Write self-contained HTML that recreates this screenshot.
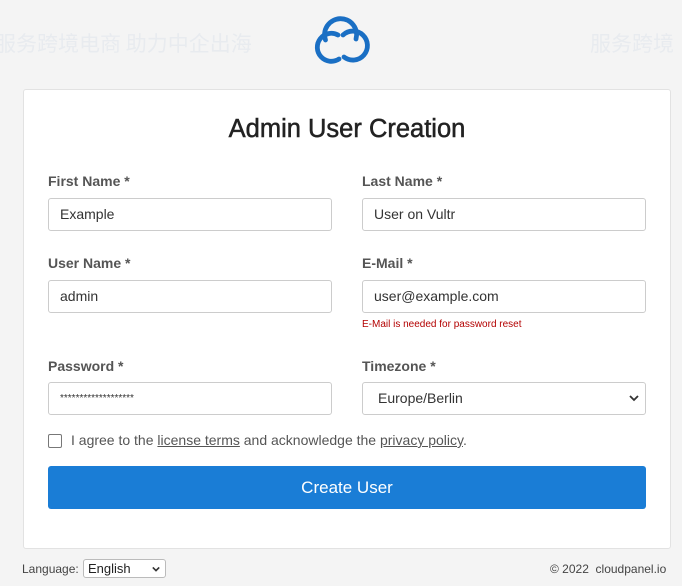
<!DOCTYPE html>
<html><head><meta charset="utf-8"><style>
body{margin:0;width:682px;height:586px;background:#f4f4f4;font-family:"Liberation Sans",Arial,sans-serif;position:relative;overflow:hidden;color:#333}
.a{position:absolute}
.card{left:23px;top:89px;width:648px;height:460px;background:#fff;border:1px solid #e2e2e2;border-radius:3px;box-sizing:border-box}
h1{position:absolute;left:0;width:694px;top:115px;margin:0;text-align:center;font-size:25.5px;font-weight:normal;color:#222;-webkit-text-stroke:.5px #222}
.lb{font-size:14px;font-weight:bold;color:#555}
.in{width:284px;height:33px;border:1px solid #ccc;border-radius:3px;box-sizing:border-box;font-size:14px;line-height:31px;padding-left:11px;color:#333;background:#fff}
.wm{color:#e8ebef;font-family:"Noto Sans CJK SC",sans-serif;font-size:21px}
</style></head><body>
<div class="a wm" style="left:-5px;top:28px">服务跨境电商 助力中企出海</div>
<div class="a wm" style="left:590px;top:28px">服务跨境</div>
<svg class="a" style="left:0;top:0" width="682" height="80" fill="none" stroke="#1a6fc4" stroke-width="4.8" stroke-linecap="round">
<path d="M325.5 40 A16 16 0 1 1 356 39"/>
<path d="M338 35 A14 14 0 1 0 339 59"/>
<path d="M343 35 A14.5 14.5 0 1 1 344 57"/>
</svg>
<div class="a card"></div>
<h1>Admin User Creation</h1>
<div class="a lb" style="left:48px;top:173px">First Name *</div>
<div class="a lb" style="left:362px;top:173px">Last Name *</div>
<div class="a in" style="left:48px;top:198px">Example</div>
<div class="a in" style="left:362px;top:198px">User on Vultr</div>
<div class="a lb" style="left:48px;top:255px">User Name *</div>
<div class="a lb" style="left:362px;top:255px">E-Mail *</div>
<div class="a in" style="left:48px;top:280px">admin</div>
<div class="a in" style="left:362px;top:280px">user@example.com</div>
<div class="a" style="left:362px;top:319px;font-size:10px;color:#b30000">E-Mail is needed for password reset</div>
<div class="a lb" style="left:48px;top:358px">Password *</div>
<div class="a lb" style="left:362px;top:358px">Timezone *</div>
<div class="a in" style="left:48px;top:382px;font-size:10px;letter-spacing:0">*******************</div>
<div class="a in" style="left:362px;top:382px;padding-left:15px">Europe/Berlin</div>
<svg class="a" style="left:629px;top:393px" width="10" height="10" viewBox="0 0 10 10"><path d="M1 3l4 4 4-4" stroke="#333" stroke-width="1.8" fill="none"/></svg>
<div class="a" style="left:48px;top:434px;width:12px;height:12px;border:1px solid #777;border-radius:2px"></div>
<div class="a" style="left:71px;top:432px;font-size:14px;color:#555">I agree to the <u>license terms</u> and acknowledge the <u>privacy policy</u>.</div>
<div class="a" style="left:48px;top:466px;width:598px;height:43px;background:#1a7dd6;border-radius:3px;color:#fff;font-size:17px;text-align:center;line-height:43px">Create User</div>
<div class="a" style="left:22px;top:562px;font-size:12px;color:#444">Language:</div>
<div class="a" style="left:83px;top:559px;width:83px;height:19px;border:1px solid #bbb;border-radius:3px;box-sizing:border-box;font-size:13px;padding-left:4px;line-height:17px;background:#fff;color:#222">English</div>
<svg class="a" style="left:152px;top:565px" width="8" height="8" viewBox="0 0 10 10"><path d="M1 3l4 4 4-4" stroke="#333" stroke-width="2" fill="none"/></svg>
<div class="a" style="left:550px;top:562px;font-size:12px;color:#444">© 2022&nbsp; cloudpanel.io</div>
</body></html>
